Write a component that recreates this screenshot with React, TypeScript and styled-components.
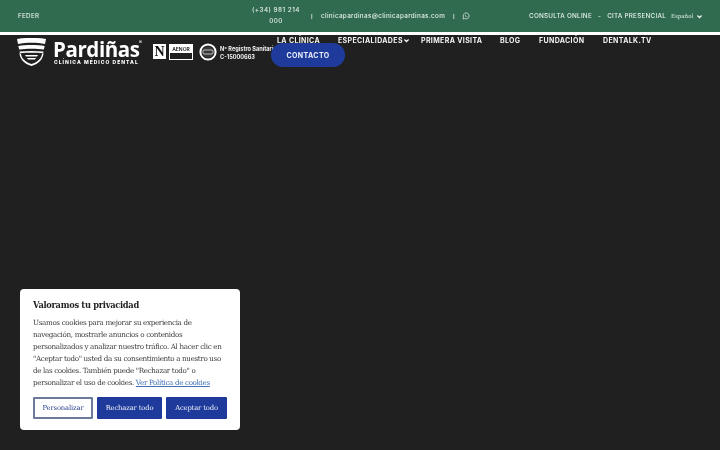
import React from "react";
import styled, { createGlobalStyle } from "styled-components";

const Global = createGlobalStyle`
  html, body { margin: 0; padding: 0; background: #202020; }
  #root { width: 720px; height: 450px; overflow: hidden; }
  * { box-sizing: border-box; }
`;

const Page = styled.div`
  width: 720px;
  height: 450px;
  background: #202020;
  display: flex;
  flex-direction: column;
  justify-content: space-between;
  font-family: Inter, "Liberation Sans", sans-serif;
`;

const Top = styled.div`display: flex; flex-direction: column;`;

const TopBar = styled.div`
  height: 32px;
  background: #306b50;
  display: flex;
  align-items: center;
  color: #e6efe9;
  font-size: 6.3px;
  font-weight: 500;
  letter-spacing: 0.3px;
  padding-left: 18px;
  & > * { flex-shrink: 0; will-change: transform; }
`;

const Feder = styled.span`width: 233px;`;

const Phone = styled.span`
  width: 50px;
  text-align: center;
  line-height: 11px;
  letter-spacing: 0.5px;
`;

const Sep = styled.span<{ $l: number; $r: number }>`
  margin: 0 ${(p) => p.$r}px 0 ${(p) => p.$l}px;
  font-size: 6px;
`;

const Email = styled.span`letter-spacing: 0.34px; width: 124px; white-space: nowrap;`;

const Actions = styled.div`
  display: flex;
  align-items: center;
  margin-left: 59px;
  white-space: nowrap;
  letter-spacing: 0.26px;
`;

const Dot = styled.span`margin: 0 6px;`;

const Lang = styled.span`
  font-family: "DejaVu Serif", serif;
  font-size: 5.5px;
  letter-spacing: 0;
  margin-left: 5px;
  display: flex;
  align-items: center;
  gap: 3px;
`;

const WhiteLine = styled.div`height: 3px; background: #fff;`;

const Header = styled.div`
  display: flex;
  height: 40px;
  color: #fff;
`;

const Brand = styled.div`
  width: 271px;
  flex-shrink: 0;
  padding: 3px 0 0 17px;
  display: flex;
  align-items: flex-start;
  will-change: transform;
  & > * { flex-shrink: 0; }
`;

const Wordmark = styled.div`
  margin: 2px 0 0 7px;
  width: 92px;
  position: relative;
`;

const Name = styled.div`
  font-family: "Open Sans", Inter, sans-serif;
  font-weight: 700;
  font-size: 20.5px;
  line-height: 19px;
  letter-spacing: -0.4px;
`;

const Tagline = styled.div`
  font-size: 5px;
  font-weight: 800;
  letter-spacing: 1.02px;
  line-height: 7px;
  white-space: nowrap;
  padding-left: 1px;
`;

const Reg = styled.span`
  position: absolute;
  top: -1px;
  right: 3px;
  font-size: 5px;
`;

const Aenor = styled.div`
  margin: 6px 0 0 8px;
  display: flex;
  gap: 3px;
`;

const AenorN = styled.span`
  width: 13px;
  height: 15px;
  background: #fff;
  color: #111;
  font-family: "Liberation Serif", serif;
  font-weight: 700;
  font-size: 14px;
  line-height: 15px;
  text-align: center;
`;

const AenorBox = styled.div`
  width: 24px;
  height: 16px;
  border: 1px solid #fff;
  display: flex;
  flex-direction: column;
`;

const AenorText = styled.span`
  height: 8px;
  background: #fff;
  color: #111;
  font-size: 5px;
  line-height: 8px;
  text-align: center;
  font-weight: 600;
`;

const Seal = styled.div`margin: 5px 0 0 6px; display: flex;`;

const Registry = styled.div`
  margin: 7px 0 0 3px;
  font-size: 5.6px;
  font-weight: 700;
  line-height: 8px;
  white-space: nowrap;
  color: #f0f0f0;
`;

const NavArea = styled.div`
  flex: 1;
  display: flex;
  flex-direction: column;
  align-items: flex-start;
`;

const Nav = styled.nav`
  display: flex;
  align-items: center;
  height: 11px;
  margin-left: 6px;
  will-change: transform;
`;

const NavItem = styled.span<{ $w: number }>`
  width: ${(p) => p.$w}px;
  font-size: 7px;
  font-weight: 700;
  letter-spacing: 0.36px;
  white-space: nowrap;
  display: flex;
  align-items: center;
  color: #f4f4f4;
`;

const ContactButton = styled.button`
  width: 74px;
  height: 24px;
  margin-top: -3px;
  border: 0;
  border-radius: 12px;
  background: #1e3a9a;
  color: #eef1fb;
  font: 700 7px Inter, sans-serif;
  letter-spacing: 0.4px;
  position: relative;
  will-change: transform;
`;

const Card = styled.section`
  width: 220px;
  height: 141px;
  margin: 0 0 20px 20px;
  background: #fff;
  border-radius: 4px;
  padding: 10px 13px 0;
  font-family: "DejaVu Serif", "Liberation Serif", serif;
`;

const CardTitle = styled.h2`
  margin: 0 0 6px;
  font-size: 8.3px;
  line-height: 12px;
  font-weight: 700;
  letter-spacing: -0.3px;
  color: #222;
  white-space: nowrap;
  will-change: transform;
`;

const CardText = styled.p`
  margin: 0;
  font-size: 7.2px;
  line-height: 12px;
  letter-spacing: -0.36px;
  color: #3c3c3c;
  white-space: nowrap;
  will-change: transform;
`;

const PolicyLink = styled.a`
  color: #3f6fb5;
  text-decoration: underline;
`;

const Buttons = styled.div`
  display: flex;
  gap: 4px;
  margin-top: 8px;
`;

const CookieButton = styled.button<{ $w: number; $outline?: boolean }>`
  width: ${(p) => p.$w}px;
  height: 22px;
  padding: 0;
  border-radius: 1px;
  font-family: "DejaVu Serif", serif;
  font-size: 6.8px;
  letter-spacing: -0.15px;
  border: ${(p) => (p.$outline ? "2px solid #6b7a99" : "0")};
  background: ${(p) => (p.$outline ? "#fff" : "#1e3a9a")};
  color: ${(p) => (p.$outline ? "#2a4190" : "#f0f2fb")};
  will-change: transform;
`;

const Shield = () => (
  <svg width="29" height="28" viewBox="0 0 29 28" fill="#fff">
    <path d="M0 1 C9 -0.5 20 -0.5 29 1 L28 6 C20 4.4 9 4.4 1 6 Z" />
    <path d="M1.300 8 C9 6.800 20 6.800 27.700 8 L26.800 11.500 C20 10.500 9 10.500 2.200 11.500 Z" />
    <path d="M2.500 13.500 C10 12.700 19 12.700 26.500 13.500 L26 15.200 C18 14.600 11 14.600 3 15.200 Z" />
    <path d="M2.400 15 C3 21 7 26 14.500 28 C22 26 26 21 26.600 15 L25 16 C24.600 20 21 24 14.500 26 C8 24 4.400 20 4 16 Z" />
    <path d="M8 17 H21 L20 18.500 H9 Z" />
    <path d="M10 20 H19 L18 21.500 H11 Z" />
  </svg>
);

const SealIcon = () => (
  <svg width="18" height="18" viewBox="0 0 18 18" fill="none">
    <circle cx="9" cy="9" r="7.600" stroke="#fff" strokeWidth="2" />
    <circle cx="9" cy="9" r="5.600" fill="#3a3a3a" />
    <rect x="4" y="7" width="10" height="4" rx="1" stroke="#ddd" strokeWidth="0.8" />
  </svg>
);

const WhatsApp = () => (
  <svg width="8" height="8" viewBox="0 0 24 24" fill="none" stroke="#e6efe9" strokeWidth="2.200">
    <path d="M3 21l1.600-5A9 9 0 1 1 8 19.500z" />
    <path d="M9 8c-1 1 0 3.500 2 5.500s4 3 5 2l.5-1.500-2.500-1-1 1c-1-.5-2-1.500-2.500-2.500l1-1-1-2.500z" fill="#e6efe9" stroke="none" />
  </svg>
);

const Chevron = ({ size }: { size: number }) => (
  <svg width={size} height={size} viewBox="0 0 10 10" fill="none" stroke="currentColor" strokeWidth="1.800">
    <path d="M2 3.500l3 3 3-3" />
  </svg>
);

export default function App() {
  return (
    <Page>
      <Global />
      <Top>
        <TopBar>
          <Feder>FEDER</Feder>
          <Phone>(+34) 981 214 000</Phone>
          <Sep $l={10} $r={8}>I</Sep>
          <Email>clinicapardinas@clinicapardinas.com</Email>
          <Sep $l={8} $r={7}>I</Sep>
          <WhatsApp />
          <Actions>
            <span>CONSULTA ONLINE</span>
            <Dot>-</Dot>
            <span>CITA PRESENCIAL</span>
            <Lang>Español <Chevron size={7} /></Lang>
          </Actions>
        </TopBar>
        <WhiteLine />
        <Header>
          <Brand>
            <Shield />
            <Wordmark>
              <Name>Pardiñas</Name>
              <Tagline>CLÍNICA MÉDICO DENTAL</Tagline>
              <Reg>®</Reg>
            </Wordmark>
            <Aenor>
              <AenorN>N</AenorN>
              <AenorBox><AenorText>AENOR</AenorText></AenorBox>
            </Aenor>
            <Seal><SealIcon /></Seal>
            <Registry>Nº Registro Sanitario<br />C-15000663</Registry>
          </Brand>
          <NavArea>
            <Nav>
              <NavItem $w={61}>LA CLÍNICA</NavItem>
              <NavItem $w={83}>ESPECIALIDADES<Chevron size={7} /></NavItem>
              <NavItem $w={79}>PRIMERA VISITA</NavItem>
              <NavItem $w={39}>BLOG</NavItem>
              <NavItem $w={64}>FUNDACIÓN</NavItem>
              <NavItem $w={60}>DENTALK.TV</NavItem>
            </Nav>
            <ContactButton>CONTACTO</ContactButton>
          </NavArea>
        </Header>
      </Top>
      <Card>
        <CardTitle>Valoramos tu privacidad</CardTitle>
        <CardText>
          Usamos cookies para mejorar su experiencia de<br />
          navegación, mostrarle anuncios o contenidos<br />
          personalizados y analizar nuestro tráfico. Al hacer clic en<br />
          "Aceptar todo" usted da su consentimiento a nuestro uso<br />
          de las cookies. También puede "Rechazar todo" o<br />
          personalizar el uso de cookies. <PolicyLink href="#">Ver Política de cookies</PolicyLink>
        </CardText>
        <Buttons>
          <CookieButton $w={60} $outline>Personalizar</CookieButton>
          <CookieButton $w={65}>Rechazar todo</CookieButton>
          <CookieButton $w={61}>Aceptar todo</CookieButton>
        </Buttons>
      </Card>
    </Page>
  );
}
